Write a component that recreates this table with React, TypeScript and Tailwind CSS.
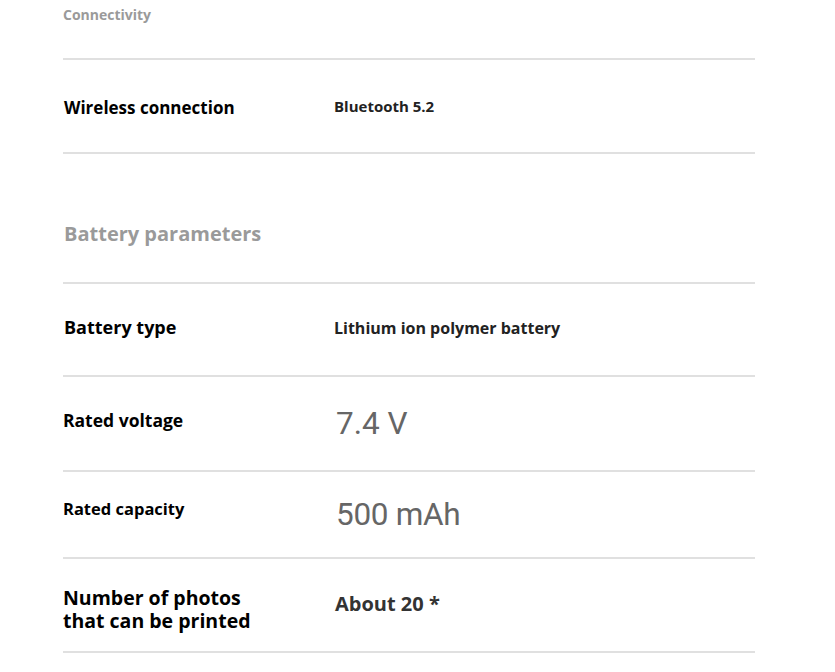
import React from 'react';

const Row = ({
    label,
    children,
    className = '',
}: {
    label: React.ReactNode;
    children: React.ReactNode;
    className?: string;
}) => (
    <div className={`flex items-center border-b-2 border-[#e0e0e0] ${className}`}>
        <div className="w-[271px] shrink-0 font-bold text-black">{label}</div>
        <div className="flex-1">{children}</div>
    </div>
);

export default function App() {
    return (
        <div className="min-h-screen bg-white font-['Open_Sans',sans-serif]">
            <div className="ml-[63px] w-[692px]">
                <div className="h-[60px] border-b-2 border-[#e0e0e0] pt-[2px]">
                    <span className="text-[14px] font-bold text-[#9a9a9a]">Connectivity</span>
                </div>

                <Row label={<div className="mt-[3px] pl-px text-[17px]">Wireless connection</div>} className="h-[94px]">
                    <div className="mt-[1px] text-[15px] font-bold text-[#222]">Bluetooth 5.2</div>
                </Row>

                <div className="flex h-[130px] items-center border-b-2 border-[#e0e0e0] pt-[32px]">
                    <span className="pl-px text-[20px] font-bold text-[#9a9a9a]">Battery parameters</span>
                </div>

                <Row label={<div className="mb-[4px] pl-px text-[18px]">Battery type</div>} className="h-[93px]">
                    <div className="mb-[4px] text-[16px] font-bold text-[#222]">Lithium ion polymer battery</div>
                </Row>

                <Row label={<div className="mb-[6px] text-[17.5px]">Rated voltage</div>} className="h-[95px]">
                    <span className="pl-[2px] font-['Roboto',sans-serif] text-[31.5px] text-[#666]">7.4 V</span>
                </Row>

                <Row label={<div className="mb-[10px] text-[16.5px]">Rated capacity</div>} className="h-[87px]">
                    <span className="pl-[2px] font-['Roboto',sans-serif] text-[31.5px] tracking-[-0.3px] text-[#666]">
                        500 mAh
                    </span>
                </Row>

                <Row
                    label={
                        <div className="mt-[8px] text-[19.5px] leading-[23px]">
                            Number of photos
                            <br />
                            that can be printed
                        </div>
                    }
                    className="h-[94px]"
                >
                    <div className="mb-[3px] pl-px text-[20px] font-bold text-[#333]">About 20 *</div>
                </Row>
            </div>
        </div>
    );
}
